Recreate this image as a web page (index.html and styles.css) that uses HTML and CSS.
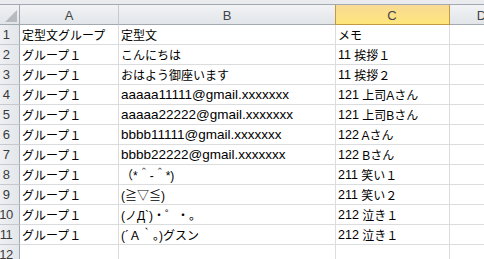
FILE: index.html
```html
<!DOCTYPE html>
<html lang="ja">
<head>
<meta charset="utf-8">
<link rel="stylesheet" href="styles.css">
</head>
<body>
<div class="topbar"></div>
<div class="sheet">
  <div class="corner"><svg class="tri" width="12" height="12" viewBox="0 0 12 12"><polygon points="0,12 12,12 12,0" fill="#b7bbc0"/></svg></div>
  <div class="ch">A</div>
  <div class="ch">B</div>
  <div class="ch sel">C</div>
  <div class="ch">D</div>

  <div class="rh">1</div><div class="c">定型文グループ</div><div class="c">定型文</div><div class="c">メモ</div><div class="c"></div>
  <div class="rh">2</div><div class="c">グループ１</div><div class="c">こんにちは</div><div class="c"><span class="num">11</span> 挨拶１</div><div class="c"></div>
  <div class="rh">3</div><div class="c">グループ１</div><div class="c">おはよう御座います</div><div class="c"><span class="num">11</span> 挨拶２</div><div class="c"></div>
  <div class="rh">4</div><div class="c">グループ１</div><div class="c"><span class="lat">aaaaa11111@gmail.xxxxxxx</span></div><div class="c"><span class="num">121</span> 上司Aさん</div><div class="c"></div>
  <div class="rh">5</div><div class="c">グループ１</div><div class="c"><span class="lat">aaaaa22222@gmail.xxxxxxx</span></div><div class="c"><span class="num">121</span> 上司Bさん</div><div class="c"></div>
  <div class="rh">6</div><div class="c">グループ１</div><div class="c"><span class="lat">bbbb11111@gmail.xxxxxxx</span></div><div class="c"><span class="num">122</span> Aさん</div><div class="c"></div>
  <div class="rh">7</div><div class="c">グループ１</div><div class="c"><span class="lat">bbbb22222@gmail.xxxxxxx</span></div><div class="c"><span class="num">122</span> Bさん</div><div class="c"></div>
  <div class="rh">8</div><div class="c">グループ１</div><div class="c">（*＾-＾*)</div><div class="c"><span class="num">211</span> 笑い１</div><div class="c"></div>
  <div class="rh">9</div><div class="c">グループ１</div><div class="c">(≧▽≦)</div><div class="c"><span class="num">211</span> 笑い２</div><div class="c"></div>
  <div class="rh">10</div><div class="c">グループ１</div><div class="c">(ノД`)・゜・。</div><div class="c"><span class="num">212</span> 泣き１</div><div class="c"></div>
  <div class="rh">11</div><div class="c">グループ１</div><div class="c">(´Ａ｀。)グスン</div><div class="c"><span class="num">212</span> 泣き１</div><div class="c"></div>
  <div class="rh">12</div><div class="c"></div><div class="c"></div><div class="c"></div><div class="c"></div>
</div>
</body>
</html>
```

FILE: styles.css
```css
html, body {
  margin: 0;
  padding: 0;
  background: #ffffff;
  overflow: hidden;
}
body {
  width: 484px;
  height: 259px;
  font-family: "Liberation Sans", "Noto Sans CJK JP", sans-serif;
}
.topbar {
  height: 4px;
  background: #e9ebee;
  border-bottom: 1px solid #a3a9b0;
}
.sheet {
  display: grid;
  grid-template-columns: 20px 99px 217px 114px 64px;
  grid-auto-rows: 20px;
  width: 520px;
}
.sheet > div {
  box-sizing: border-box;
}
.corner {
  background: linear-gradient(#eff1f4, #e2e5e9);
  border-right: 1px solid #a3a9b0;
  border-bottom: 1px solid #a3a9b0;
  display: flex;
  align-items: flex-end;
  justify-content: flex-end;
  padding: 0 2px 2px 0;
}
.tri {
  display: block;
}
.ch {
  background: linear-gradient(#f1f3f5, #e2e5e9);
  border-right: 1px solid #c6cace;
  border-bottom: 1px solid #a3a9b0;
  display: flex;
  align-items: center;
  justify-content: center;
  font-size: 13px;
  color: #444444;
  padding-top: 1px;
}
.ch.sel {
  background: linear-gradient(#f8da94, #fee67c);
  border-right: 1px solid #c29a40;
  border-bottom: 1px solid #c29a40;
  box-shadow: inset 1px 0 0 #c29a40;
  margin-left: -1px;
}
.rh {
  background: linear-gradient(90deg, #eef0f3, #e3e6ea);
  border-right: 1px solid #a3a9b0;
  border-bottom: 1px solid #c6cace;
  display: flex;
  align-items: center;
  justify-content: center;
  padding-right: 7px;
  font-size: 13px;
  color: #3a3a3a;
  letter-spacing: -0.5px;
}
.c {
  border-right: 1px solid #dadcdd;
  border-bottom: 1px solid #dadcdd;
  display: flex;
  align-items: center;
  padding-left: 2px;
  font-size: 12px;
  color: #000000;
  white-space: pre;
  overflow: hidden;
}
.lat {
  font-size: 13.5px;
}
.num {
  font-size: 12.5px;
}
```
